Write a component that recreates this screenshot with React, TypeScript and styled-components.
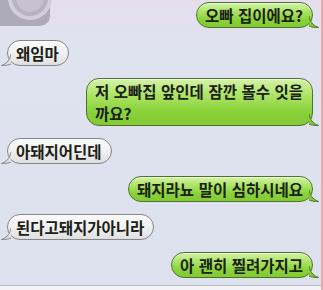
import React from "react";
import styled, { createGlobalStyle } from "styled-components";

const Global = createGlobalStyle`
  html, body { margin: 0; padding: 0; background: #dfe2ee; }
  body { font-family: "Noto Sans CJK KR", "Noto Sans", sans-serif; }
`;

const Screen = styled.div`
  position: relative;
  width: 323px;
  height: 290px;
  overflow: hidden;
  box-sizing: border-box;
  background: linear-gradient(180deg, #e6dfeb 0px, #dfe2ef 40px, #dde1ee 100%);
  border-right: 2px solid #e9a9b2;
  display: flex;
  flex-direction: column;
`;

const Thread = styled.div`
  display: flex;
  flex-direction: column;
  gap: 12px;
  padding: 2px 8px 0 7px;
`;

const Row = styled.div<{ $side: "left" | "right" }>`
  display: flex;
  justify-content: ${(p) => (p.$side === "right" ? "flex-end" : "flex-start")};
`;

const Bubble = styled.div<{ $side: "left" | "right" }>`
  position: relative;
  box-sizing: border-box;
  padding: 1px 9px 1px 8px;
  border-radius: 13px;
  font-size: 15.5px;
  font-weight: 700;
  line-height: 22px;
  word-spacing: 1px;
  color: #1b2116;
  white-space: nowrap;
  border: 1px solid ${(p) => (p.$side === "right" ? "#4a7529" : "#85858a")};
  background: ${(p) =>
    p.$side === "right"
      ? "linear-gradient(180deg, #d6f2aa 0%, #ace465 35%, #8ad23a 70%, #82c933 100%)"
      : "linear-gradient(180deg, #fbfbfb 0%, #efefef 55%, #dfdfe1 100%)"};
  box-shadow: inset 0 1px 0 rgba(255, 255, 255, 0.6);
`;

const Tail = styled.svg<{ $side: "left" | "right" }>`
  position: absolute;
  bottom: -1px;
  width: 10px;
  height: 13px;
  ${(p) => (p.$side === "right" ? "right: -7px;" : "left: -7px; transform: scaleX(-1);")}
`;

const Footer = styled.div`
  margin-top: auto;
  height: 4px;
  border-top: 1px solid #b9bac6;
  background: #f3f3f6;
`;

const Corner = styled.svg`
  position: absolute;
  left: 0;
  top: 0;
`;

function BubbleTail({ side }: { side: "left" | "right" }) {
  const fill = side === "right" ? "#82c933" : "#dfdfe1";
  const stroke = side === "right" ? "#4a7529" : "#85858a";
  return (
    <Tail $side={side} viewBox="0 0 10 13">
      <path d="M0 1 C1 6 3 10 9.5 12.5 C5 12.5 2 12 0 11 Z" fill={fill} />
      <path d="M0 1 C1 6 3 10 9.5 12.5 C5 12.5 2 12 0 11" fill="none" stroke={stroke} strokeWidth="1" />
    </Tail>
  );
}

type Msg = { side: "left" | "right"; lines: string[] };

const messages: Msg[] = [
  { side: "right", lines: ["오빠 집이에요?"] },
  { side: "left", lines: ["왜임마"] },
  { side: "right", lines: ["저 오빠집 앞인데 잠깐 볼수 잇을", "까요?"] },
  { side: "left", lines: ["아돼지어딘데"] },
  { side: "right", lines: ["돼지라뇨 말이 심하시네요"] },
  { side: "left", lines: ["된다고돼지가아니라"] },
  { side: "right", lines: ["아 괜히 찔려가지고"] },
];

export default function App() {
  return (
    <>
      <Global />
      <Screen>
        <Corner width="56" height="30" viewBox="0 0 56 30">
          <rect x="-8" y="-20" width="58" height="46" rx="10" fill="#aeabb9" />
          <circle cx="30" cy="-2" r="22" fill="#d2cfda" />
          <circle cx="30" cy="-2" r="18" fill="#b7b4c2" />
          <circle cx="30" cy="-2" r="14" fill="#c6c3cf" />
        </Corner>
        <Thread>
          {messages.map((m, i) => (
            <Row key={i} $side={m.side}>
              <Bubble $side={m.side}>
                {m.lines.map((l, j) => (
                  <div key={j}>{l}</div>
                ))}
                <BubbleTail side={m.side} />
              </Bubble>
            </Row>
          ))}
        </Thread>
        <Footer />
      </Screen>
    </>
  );
}
